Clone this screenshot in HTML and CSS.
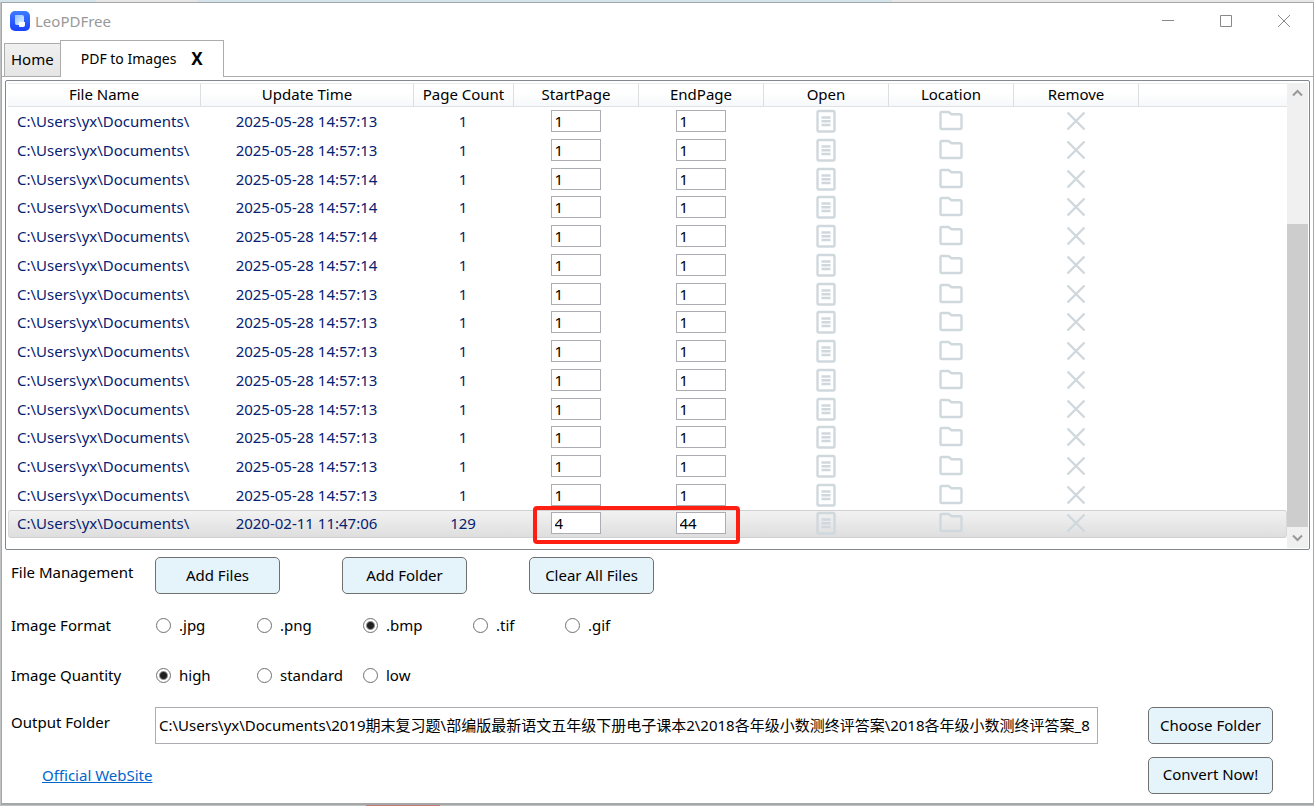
FILE: index.html
```html
<!DOCTYPE html>
<html lang="en">
<head>
    <meta charset="UTF-8">
    <meta name="viewport" content="width=device-width, initial-scale=1.0">
    <title>LeoPDFree</title>
    <link rel="stylesheet" href="styles.css">
</head>
<body>

    <!-- Shared icons -->
    <svg class="sprite" aria-hidden="true">
        <symbol id="icon-doc" viewBox="0 0 24 24">
            <rect x="3.5" y="2" width="17" height="20.5" rx="1.5"/>
            <path d="M7.5 8.5h9M7.5 12.2h9M7.5 16h9"/>
        </symbol>
        <symbol id="icon-folder" viewBox="0 0 24 24">
            <path d="M2.500 3h7l3 2.300h8.500q1.500 0 1.500 1.500v11.700q0 1.500-1.500 1.500H3q-1.500 0-1.500-1.500V4q0-1 1-1z"/>
        </symbol>
        <symbol id="icon-remove" viewBox="0 0 24 24">
            <path d="M3.500 3.500l17 17M20.500 3.500l-17 17"/>
        </symbol>
    </svg>

    <div class="window">
        <!-- Title bar -->
        <header class="titlebar">
            <svg class="logo" viewBox="0 0 20 20" aria-hidden="true">
                <defs>
                    <linearGradient id="logoBg" x1="0" y1="0" x2="0" y2="1">
                        <stop offset="0" stop-color="#3d7bff"/>
                        <stop offset="1" stop-color="#1a42ff"/>
                    </linearGradient>
                    <linearGradient id="logoPage" x1="0" y1="0" x2="1" y2="1">
                        <stop offset="0" stop-color="#8fc0ff"/>
                        <stop offset="1" stop-color="#e8f2ff"/>
                    </linearGradient>
                </defs>
                <rect width="20" height="20" rx="5" fill="url(#logoBg)"/>
                <path d="M5 4.500q0-.5.500-.5H12q2 0 2 2v5H9v3H7q-2 0-2-2z" fill="url(#logoPage)"/>
                <path d="M9 11h6v3q0 2-2 2h-3q-1 0-1-1z" fill="#fff"/>
            </svg>
            <h1 class="title">LeoPDFree</h1>
            <div class="window-buttons">
                <button type="button" aria-label="Minimize"><svg viewBox="0 0 12 12"><path d="M0 5.500h12"/></svg></button>
                <button type="button" aria-label="Maximize"><svg viewBox="0 0 12 12"><path d="M.5.5h11v11H.5z"/></svg></button>
                <button type="button" aria-label="Close"><svg viewBox="0 0 12 12"><path d="M0 0l12 12M12 0L0 12"/></svg></button>
            </div>
        </header>

        <!-- Tabs -->
        <nav class="tabs">
            <button type="button" class="tab">Home</button>
            <div class="tab active">
                <button type="button" class="tab-name">PDF to Images</button>
                <button type="button" class="tab-close" aria-label="Close tab">X</button>
            </div>
        </nav>

        <main class="panel">
            <!-- File list -->
            <div class="list">
                <table class="files">
                    <thead>
                        <tr>
                            <th class="col-name">File Name</th>
                            <th class="col-time">Update Time</th>
                            <th class="col-count">Page Count</th>
                            <th class="col-page">StartPage</th>
                            <th class="col-page">EndPage</th>
                            <th class="col-page">Open</th>
                            <th class="col-page">Location</th>
                            <th class="col-page">Remove</th>
                            <td></td>
                        </tr>
                    </thead>
                    <tbody id="fileRows"></tbody>
                </table>
                <div class="scrollbar">
                    <svg class="arrow" viewBox="0 0 21 21"><path d="M6 12.500L10.500 8l4.500 4.500"/></svg>
                    <div class="thumb"></div>
                    <svg class="arrow" viewBox="0 0 21 21"><path d="M6 8.500l4.500 4.500L15 8.500"/></svg>
                </div>
            </div>

            <!-- Options -->
            <form class="options" onsubmit="return false">
                <div class="row files-row">
                    <span class="label">File Management</span>
                    <div class="actions">
                        <button type="button" class="btn">Add Files</button>
                        <button type="button" class="btn">Add Folder</button>
                        <button type="button" class="btn">Clear All Files</button>
                    </div>
                </div>
                <div class="row" role="radiogroup" aria-labelledby="formatLabel">
                    <span class="label" id="formatLabel">Image Format</span>
                    <label class="radio w-mid"><input type="radio" name="format">.jpg</label>
                    <label class="radio w-wide"><input type="radio" name="format">.png</label>
                    <label class="radio w-widest"><input type="radio" name="format" checked>.bmp</label>
                    <label class="radio w-narrow"><input type="radio" name="format">.tif</label>
                    <label class="radio"><input type="radio" name="format">.gif</label>
                </div>
                <div class="row" role="radiogroup" aria-labelledby="quantityLabel">
                    <span class="label" id="quantityLabel">Image Quantity</span>
                    <label class="radio w-mid"><input type="radio" name="quantity" checked>high</label>
                    <label class="radio w-wide"><input type="radio" name="quantity">standard</label>
                    <label class="radio"><input type="radio" name="quantity">low</label>
                </div>
                <div class="row output-row">
                    <label class="label" for="output">Output Folder</label>
                    <input type="text" class="output" id="output" value="C:\Users\yx\Documents\2019期末复习题\部编版最新语文五年级下册电子课本2\2018各年级小数测终评答案\2018各年级小数测终评答案_8">
                    <button type="button" class="btn">Choose Folder</button>
                </div>
                <div class="row footer">
                    <a class="site" href="#">Official WebSite</a>
                    <button type="submit" class="btn">Convert Now!</button>
                </div>
            </form>
        </main>
    </div>

    <script src="script.js"></script>
</body>
</html>
```
FILE: styles.css
```css
* {
    box-sizing: border-box;
}

/* Desktop showing round the edges of the window */
body {
    margin: 0;
    padding: 2px 0 1px 1px;
    height: 100vh;
    background:
        linear-gradient(#c47a76, #c47a76) 366px 100% / 74px 1px no-repeat,
        linear-gradient(#e6e6e6, #e6e6e6) 96px 0 / 101px 2px no-repeat,
        linear-gradient(#d5e3ea, #d5e3ea) 0 0 / 892px 2px no-repeat,
        linear-gradient(#e8e8e8, #e8e8e8) 0 0 / 100% 2px no-repeat,
        #bfc2c2;
    font-family: "Noto Sans", "Noto Sans CJK SC", sans-serif;
    font-size: 15px;
    line-height: 20px;
    color: #000;
}

button,
input {
    font: inherit;
    color: inherit;
}

button {
    padding: 0;
    border: none;
    background: none;
}

.sprite {
    display: none;
}

.window {
    display: flex;
    flex-direction: column;
    height: 100%;
    border: 1px solid #a5a8a8;
    border-bottom-width: 2px;
    background: #fff;
}

/* Title bar */
.titlebar {
    display: flex;
    align-items: center;
    height: 36px;
    padding-left: 8px;
}

.logo {
    width: 20px;
    height: 20px;
}

.title {
    margin: 0 0 0 5px;
    font-size: 15px;
    font-weight: normal;
    color: #999;
}

.window-buttons {
    display: flex;
    margin-left: auto;
}

.window-buttons button {
    display: flex;
    align-items: center;
    justify-content: center;
    width: 58px;
    height: 36px;
}

.window-buttons svg {
    width: 12px;
    height: 12px;
    fill: none;
    stroke: #888;
}

/* Tabs */
.tabs {
    display: flex;
    align-items: flex-end;
    height: 37px;
    padding-left: 2px;
}

.tab {
    height: 33px;
    padding: 0 6px 2px;
    border: 1px solid #acacac;
    border-width: 1px 0 0 1px;
    background: linear-gradient(#f0f0f0, #e5e5e5);
}

.tab.active {
    position: relative;
    display: flex;
    align-items: center;
    gap: 15px;
    height: 37px;
    margin-bottom: -1px;
    padding: 0 20px 1px;
    border-width: 1px 1px 0;
    background: #fff;
}

.tab-name {
    font-size: 14px;
}

.tab-close {
    font-size: 17px;
    font-weight: bold;
}

.panel {
    display: flex;
    flex: 1;
    flex-direction: column;
    padding: 3px 3px 0;
    border-top: 1px solid #acacac;
}

/* File list */
.list {
    display: flex;
    height: 470px;
    padding: 2px 1px 1px 2px;
    border: 1px solid #828790;
    border-radius: 2px;
}

.files {
    flex: 1;
    align-self: flex-start;
    table-layout: fixed;
    border-collapse: separate;
    border-spacing: 0;
    text-align: center;
}

.files th,
.files td {
    padding: 0 2px 2px 0;
}

.files thead tr {
    height: 24px;
    background: linear-gradient(#fff 40%, #f5f7f8);
}

.files thead th,
.files thead td {
    border-top: 1px solid #eceeef;
    border-bottom: 1px solid #e0e3e5;
    font-weight: normal;
}

.files thead th {
    padding-right: 0;
    border-right: 1px solid #dcdee0;
}

.col-name { width: 193px; }
.col-time { width: 213px; }
.col-count { width: 100px; }
.col-page { width: 125px; }

.files tbody tr {
    height: 29px;
    color: #042271;
}

.files tbody tr:nth-child(4n),
.files tbody .selected {
    height: 28px;
}

.files tbody td:first-child {
    padding-left: 9px;
    text-align: left;
}

.page-input {
    display: block;
    width: 50px;
    height: 22px;
    margin: 0 auto;
    padding: 0 3px;
    border: 1px solid #abadb3;
    background: #fff;
    color: #000;
}

.icon-btn {
    display: block;
    margin: 0 auto;
}

.icon-btn svg {
    display: block;
    width: 24px;
    height: 24px;
    fill: none;
    stroke: #cfd8dd;
    stroke-width: 2.4;
}

.files .selected td {
    border-top: 1px solid #d0d0d0;
    border-bottom: 1px solid #d0d0d0;
    background: linear-gradient(#f2f2f2, #dedede);
}

.files .selected td:first-child {
    border-left: 1px solid #d9d9d9;
    border-radius: 3px 0 0 3px;
    padding-left: 8px;
}

.files .selected td:last-child {
    border-right: 1px solid #d9d9d9;
    border-radius: 0 3px 3px 0;
}

.files .selected {
    position: relative;
}

.selected td {
    line-height: 18px;
}

/* Red frame round the page range of the selected file */
.range-mark {
    position: absolute;
    top: -4px;
    left: 525px;
    width: 207px;
    height: 38px;
    border: 4px solid #ff1e12;
    border-radius: 4px;
    pointer-events: none;
}

.scrollbar {
    display: flex;
    flex-direction: column;
    width: 21px;
    background: #f0f0f0;
}

.arrow {
    width: 21px;
    height: 21px;
    fill: none;
    stroke: #999;
    stroke-width: 2;
}

.thumb {
    height: 303px;
    margin-top: auto;
    background: #cdcdcd;
}

/* Options */
.options {
    display: flex;
    flex-direction: column;
    padding: 7px 37px 0 6px;
}

.row {
    display: flex;
    align-items: center;
    height: 50px;
}

.label {
    width: 144px;
}

.files-row {
    align-items: flex-start;
    height: 43px;
}

.files-row .label,
.output-row .label {
    padding-top: 5px;
}

.actions {
    display: flex;
    gap: 62px;
}

.btn {
    width: 125px;
    height: 37px;
    padding-bottom: 2px;
    border: 1px solid #707070;
    border-radius: 5px;
    background: #e5f3fb;
}

.radio {
    display: flex;
    align-items: center;
    gap: 8px;
    padding-left: 1px;
}

.radio input {
    appearance: none;
    width: 15px;
    height: 15px;
    margin: 0;
    border: 1px solid #707070;
    border-radius: 50%;
    background: #fff;
}

.radio input:checked {
    background: radial-gradient(circle, #212121 3px, #fff 5px);
}

.w-narrow { width: 92px; }
.w-mid { width: 101px; }
.w-wide { width: 106px; }
.w-widest { width: 110px; }

.output-row {
    align-items: flex-start;
    padding-top: 7px;
}

.output {
    flex: 1;
    min-width: 0;
    height: 37px;
    margin-right: 50px;
    padding: 0 0 2px 3px;
    border: 1px solid #abadb3;
    background: #fff;
}

.footer {
    justify-content: space-between;
}

.site {
    margin-left: 31px;
    color: #0066cc;
}
```
FILE: script.js
```javascript
const times = [
    "2025-05-28 14:57:13",
    "2025-05-28 14:57:13",
    "2025-05-28 14:57:14",
    "2025-05-28 14:57:14",
    "2025-05-28 14:57:14",
    "2025-05-28 14:57:14",
    "2025-05-28 14:57:13",
    "2025-05-28 14:57:13",
    "2025-05-28 14:57:13",
    "2025-05-28 14:57:13",
    "2025-05-28 14:57:13",
    "2025-05-28 14:57:13",
    "2025-05-28 14:57:13",
    "2025-05-28 14:57:13"
];

const files = times.map(time => ({ time, count: 1, start: 1, end: 1 }));
files.push({ time: "2020-02-11 11:47:06", count: 129, start: 4, end: 44, selected: true });

function iconCell(name, label) {
    return `<td><button type="button" class="icon-btn" aria-label="${label}"><svg><use href="#icon-${name}"/></svg></button></td>`;
}

document.getElementById("fileRows").innerHTML = files.map(file => `
    <tr class="${file.selected ? "selected" : ""}">
        <td>C:\\Users\\yx\\Documents\\</td>
        <td>${file.time}</td>
        <td>${file.count}</td>
        <td><input type="text" class="page-input" aria-label="Start page" value="${file.start}"></td>
        <td><input type="text" class="page-input" aria-label="End page" value="${file.end}"></td>
        ${iconCell("doc", "Open file")}
        ${iconCell("folder", "Open location")}
        ${iconCell("remove", "Remove file")}
        <td>${file.selected ? '<div class="range-mark"></div>' : ""}</td>
    </tr>
`).join("");
```
